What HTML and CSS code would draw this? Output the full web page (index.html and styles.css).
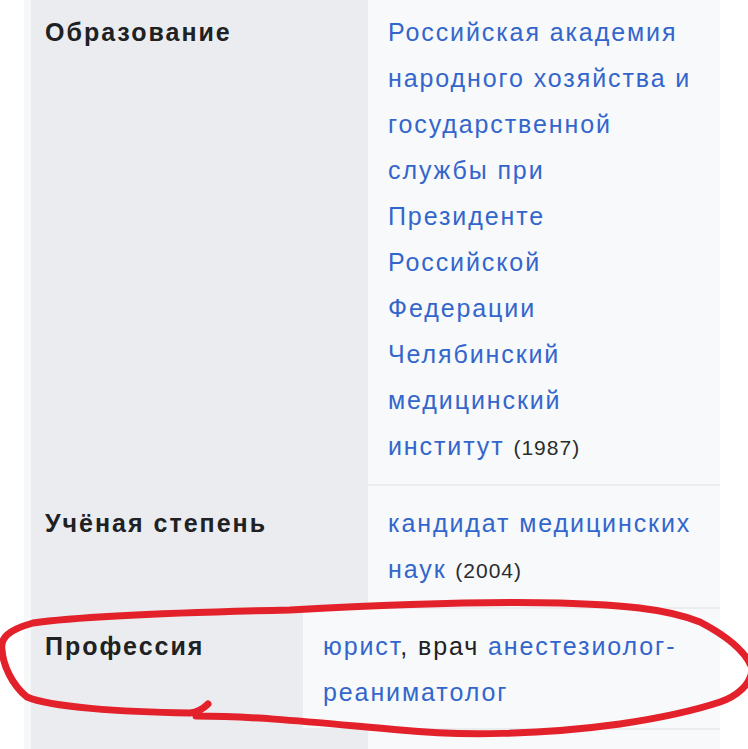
FILE: index.html
```html
<!DOCTYPE html>
<html lang="ru">
<head>
<meta charset="utf-8">
<title>Инфобокс</title>
<link rel="stylesheet" href="styles.css">
</head>
<body>
<div class="page">
  <div class="infobox">
    <div class="row">
      <div class="label">Образование</div>
      <div class="value">
        <a href="#">Российская академия народного хозяйства и государственной службы при Президенте Российской Федерации</a><br>
        <a href="#">Челябинский медицинский институт</a>&nbsp;<span class="note">(1987)</span>
      </div>
    </div>
    <div class="row">
      <div class="label">Учёная степень</div>
      <div class="value">
        <a href="#">кандидат медицинских наук</a>&nbsp;<span class="note">(2004)</span>
      </div>
    </div>
    <div class="row row-wide">
      <div class="label">Профессия</div>
      <div class="value">
        <a href="#">юрист</a>, врач <a href="#">анестезиолог-реаниматолог</a>
      </div>
    </div>
    <div class="row">
      <div class="label">&nbsp;</div>
      <div class="value">&nbsp;</div>
    </div>
  </div>
  <svg class="scribble" width="748" height="749" viewBox="0 0 748 749" aria-hidden="true">
    <path d="M208 704 Q200 712 190 713 C120 712 50 707 27 697 C12 685 3 665 2 650 C0 638 8 630 33 623 C90 615 200 612 290 610 C380 605 480 601 560 603 C620 605 665 608 700 622 C725 635 745 650 752 668 C752 685 735 697 720 702 C690 712 660 718 620 724 C540 735 460 736 400 730 C330 724 260 716 196 716"/>
  </svg>
</div>
</body>
</html>
```

FILE: styles.css
```css
html, body {
  margin: 0;
  padding: 0;
  background: #ffffff;
}

.page {
  position: relative;
  width: 748px;
  height: 749px;
  overflow: hidden;
}

.infobox {
  margin: -5px 0 0 24px;
  width: 689px;
  padding-left: 7px;
  background: #f6f7f9;
  display: flex;
  flex-direction: column;
  font-family: "Liberation Sans", Arial, sans-serif;
  font-size: 25px;
  line-height: 46px;
  letter-spacing: 1.9px;
  color: #202122;
}

.row {
  display: grid;
  grid-template-columns: 337px 1fr;
}

.row-wide {
  grid-template-columns: 272px 1fr;
}

.row + .row .label {
  border-top: 2px solid #eaecf0;
}

.row + .row .value {
  border-top: 2px solid #eaecf0;
}

.label {
  background: #eaecf0;
  font-weight: bold;
  letter-spacing: 2px;
  padding: 14px 14px 13px 14px;
}

.value {
  background: #f8f9fa;
  padding: 14px 23px 13px 20px;
}

.value a {
  color: #3366cc;
  text-decoration: none;
}

.note {
  font-size: 21px;
  color: #2b2c2e;
  letter-spacing: 1px;
}

.scribble {
  position: absolute;
  left: 0;
  top: 0;
  pointer-events: none;
}

.scribble path {
  fill: none;
  stroke: #e3212b;
  stroke-width: 7;
  stroke-linecap: round;
  stroke-linejoin: round;
}
```
